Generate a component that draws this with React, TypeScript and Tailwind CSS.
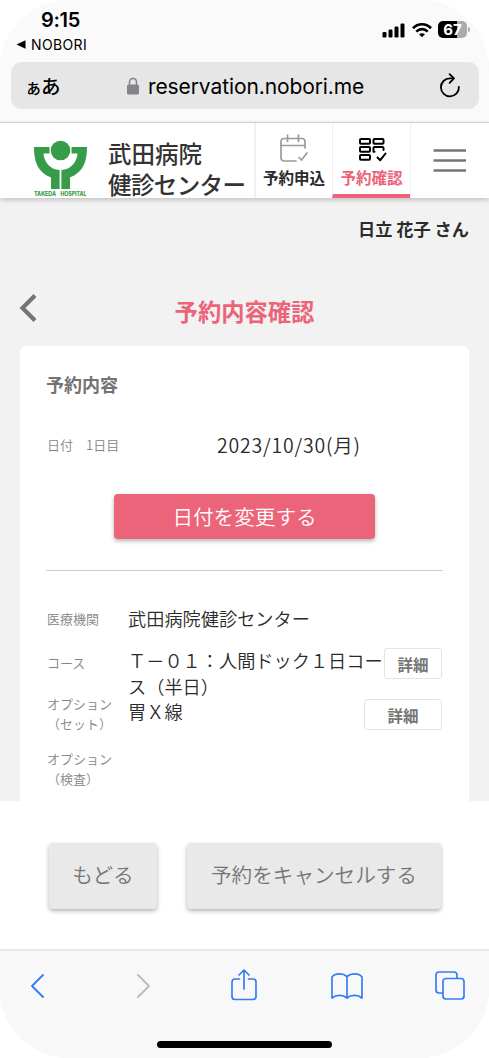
import type { ReactNode } from "react";

function StatusBar() {
  return (
    <div className="flex h-[62px] items-start justify-between">
      <div className="pt-[8px] pl-[16px]">
        <div className="pl-[25px] text-[20px] leading-[24px] font-semibold tracking-[-0.3px]">9:15</div>
        <div className="flex h-[24px] items-center gap-[5px]">
          <svg width="10" height="9" viewBox="0 0 10 9">
            <path d="M0.5 4.5L9.5 0.2V8.8Z" />
          </svg>
          <span className="text-[14px] tracking-[0.35px]">NOBORI</span>
        </div>
      </div>
      <div className="flex items-center gap-[6px] pt-[21px] pr-[19px]">
        <svg width="24" height="16" viewBox="0 0 24 16">
          <rect x="0.5" y="10" width="4" height="5.5" rx="1.2" />
          <rect x="6.5" y="7.5" width="4" height="8" rx="1.2" />
          <rect x="12.5" y="4.5" width="4" height="11" rx="1.2" />
          <rect x="18.5" y="1.5" width="4" height="14" rx="1.2" />
        </svg>
        <svg width="20" height="16" viewBox="0 0 20 16" fill="none" stroke="#000" strokeWidth="2.7">
          <path d="M1 6.2C6 0.9 14 0.9 19 6.2" />
          <path d="M4.3 9.6C7.5 6.4 12.5 6.4 15.7 9.6" />
          <path d="M10 15.2L7 12.2C8.7 10.8 11.3 10.8 13 12.2Z" fill="#000" stroke="none" />
        </svg>
        <div className="flex items-center gap-px">
          <div className="flex h-[17px] w-[29px] items-center justify-center rounded-[5px] bg-[linear-gradient(90deg,#000_67%,#ababab_67%)] text-[15px] leading-none font-bold text-white">
            67
          </div>
          <div className="h-[5px] w-[2px] rounded-r-full bg-[#ababab]" />
        </div>
      </div>
    </div>
  );
}

function AddressBar() {
  return (
    <div className="mr-[10px] ml-[11px] flex h-[47px] items-center rounded-[11px] bg-[#e6e6e6]">
      <div className="flex w-[115px] items-baseline pl-[14px] font-['Noto_Sans_CJK_JP',sans-serif] leading-none font-medium">
        <span className="-mr-px text-[17px]">ぁ</span>
        <span className="text-[19.5px]">あ</span>
      </div>
      <svg width="14" height="18" viewBox="0 0 14 18">
        <path d="M3.5 9V5.2C3.5 0.2 10.5 0.2 10.5 5.2V9" fill="none" stroke="#858489" strokeWidth="1.5" />
        <rect x="1" y="7.6" width="12" height="10" rx="1.6" fill="#858489" />
      </svg>
      <div className="flex-1 pt-[2px] pl-[8px] text-[21px] tracking-[-0.1px]">reservation.nobori.me</div>
      <svg className="mr-[17px]" width="24" height="28" viewBox="0 0 24 28" fill="none" stroke="#000" strokeWidth="1.8" strokeLinecap="round" strokeLinejoin="round">
        <path d="M20.9 14.8A9 9 0 1 1 11.9 6.3H15.5" />
        <path d="M11.6 2.2L16 6.4L11.6 10.8" />
      </svg>
    </div>
  );
}

function HospitalLogo() {
  return (
    <svg className="overflow-visible" width="56" height="58" viewBox="0 0 56 58" fill="#369c49">
      <circle cx="27.5" cy="10.5" r="9.8" />
      <path d="M1 7H16.5V13.5H10.5C11 22 17 29.5 26.6 30V49H18V37.5C7 33 1 25 1 7Z" />
      <path d="M54 7H38.5V13.5H44.5C44 22 38 29.5 28.4 30V49H37V37.5C48 33 54 25 54 7Z" />
      <text x="1" y="55.5" fontSize="5.5" fontWeight="800" textLength="22" lengthAdjust="spacingAndGlyphs">TAKEDA</text>
      <text x="27.5" y="55.5" fontSize="5.5" fontWeight="800" textLength="26" lengthAdjust="spacingAndGlyphs">HOSPITAL</text>
    </svg>
  );
}

function SiteHeader() {
  return (
    <header className="relative flex h-[76px] border-t border-[#cfcfcf] bg-white font-['Noto_Sans_CJK_JP',sans-serif] shadow-[0_2px_5px_rgba(0,0,0,0.2)]">
      <div className="flex w-[254px] pl-[33px]">
        <div className="pt-[17px] font-['Inter',sans-serif]">
          <HospitalLogo />
        </div>
        <div className="pt-[15px] pl-[19px] text-[23.5px] leading-[31px] font-medium whitespace-nowrap text-[#333]">
          <div>武田病院</div>
          <div className="tracking-[-0.6px]">健診センター</div>
        </div>
      </div>
      <div className="flex w-[78px] flex-col items-center border-l-2 border-[#f0f0f0] pt-[11px]">
        <svg width="30" height="30" viewBox="0 0 30 30" fill="none" stroke="#9a9a9a" strokeWidth="1.7" strokeLinecap="round">
          <path d="M26 14V7.5Q26 4.5 23 4.5H5Q2 4.5 2 7.5V23.5Q2 27 5.5 27H17" />
          <path d="M2 11.5H26M8.5 1.2V7.5M19.5 1.2V7.5M20 23.5L22.5 26L28 19" />
        </svg>
        <div className="pt-px text-[15.5px] leading-[24px] font-bold text-[#2b2b2b]">予約申込</div>
      </div>
      <div className="flex w-[78px] flex-col items-center border-b-4 border-l border-b-[#ec6479] border-l-[#f0f0f0] pt-[11px]">
        <svg width="30" height="30" viewBox="0 0 30 30" fill="none" stroke="#000" strokeWidth="2" strokeLinecap="round" strokeLinejoin="round">
          <rect x="3" y="5" width="10" height="4.8" rx="1" />
          <rect x="16.5" y="5" width="10" height="4.8" rx="1" />
          <rect x="3" y="13" width="10" height="4.8" rx="1" />
          <rect x="3" y="21" width="10" height="4.8" rx="1" />
          <path d="M17.5 17.8H16.5V14Q16.5 13 17.5 13H25.5Q26.5 13 26.5 14V16M20.5 23.5L23.3 26.2L28.5 19.5" />
        </svg>
        <div className="pt-px text-[15.5px] leading-[24px] font-bold text-[#ec6479]">予約確認</div>
      </div>
      <div className="flex flex-1 justify-center border-l border-[#f0f0f0] pt-[25px]">
        <svg width="34" height="26" viewBox="0 0 34 26" stroke="#757575" strokeWidth="2.4">
          <path d="M0.5 2.5H33M0.5 12.5H33M0.5 22.5H33" />
        </svg>
      </div>
    </header>
  );
}

function DetailButton({ className }: { className: string }) {
  return (
    <button className={`h-[31px] shrink-0 rounded-[3px] border-[1.5px] border-[#e3e4e8] bg-white pt-[2px] text-[15.5px] leading-none font-bold text-[#757575] ${className}`}>
      詳細
    </button>
  );
}

function Label({ children }: { children: ReactNode }) {
  return <div className="w-[81px] shrink-0 text-[13px] leading-[19.5px] text-[#858585]">{children}</div>;
}

function ReservationCard() {
  return (
    <section className="mx-[20px] h-[455px] rounded-t-[6px] bg-white px-[26px] font-[350]">
      <h2 className="pt-[25px] text-[18px] leading-[26px] font-bold text-[#737373]">予約内容</h2>
      <div className="mt-[33px] flex h-[30px] items-center">
        <div className="w-[171px] pl-px text-[13px] text-[#858585]">日付　1日目</div>
        <div className="text-[19.5px] tracking-[0.8px] text-[#2b2b2b]">2023/10/30(月)</div>
      </div>
      <button className="mt-[34px] ml-[68px] flex h-[45px] w-[261px] items-center justify-center rounded-[4px] bg-[#ec6479] pb-px text-[20.6px] text-white shadow-[0_2px_4px_rgba(0,0,0,0.3)]">
        日付を変更する
      </button>
      <hr className="mt-[31px] border-[#cbcfcf]" />

      <div className="mt-[33px] flex h-[30px] items-center pl-px">
        <Label>医療機関</Label>
        <div className="text-[18.2px] text-[#2b2b2b]">武田病院健診センター</div>
      </div>
      <div className="mt-[14px] flex h-[51px] pl-px">
        <div className="pt-[5px]">
          <Label>コース</Label>
        </div>
        <div className="-mt-px w-[256px] shrink-0 text-[18.2px] leading-[26px] text-[#2b2b2b]">
          Ｔ－０１：人間ドック１日コー
          <br />
          ス（半日）
        </div>
        <DetailButton className="w-[58px]" />
      </div>
      <div className="flex h-[55px] pl-px">
        <div className="-mt-[5px]">
          <Label>
            オプション
            <br />
            （セット）
          </Label>
        </div>
        <div className="-mt-px w-[236px] shrink-0 text-[18.2px] leading-[26px] text-[#2b2b2b]">胃Ｘ線</div>
        <DetailButton className="w-[78px]" />
      </div>
      <div className="-mt-[5px] pl-px">
        <Label>
          オプション
          <br />
          （検査）
        </Label>
      </div>
    </section>
  );
}

function ActionButton({ className, children }: { className: string; children: ReactNode }) {
  return (
    <button className={`h-[66px] rounded-[4px] bg-[#e9e9e9] text-[20.6px] font-[350] text-[#757575] shadow-[0_2px_4px_rgba(0,0,0,0.3)] ${className}`}>
      {children}
    </button>
  );
}

function BrowserToolbar() {
  return (
    <footer className="h-[109px] border-t-2 border-[#e8e8e8] bg-[#f8f8f8]">
      <div className="flex h-[70px] items-center pl-[28px]">
        <svg width="18" height="28" viewBox="0 0 18 28" fill="none" stroke="#347cf6" strokeWidth="1.9" strokeLinecap="round" strokeLinejoin="round">
          <path d="M15 3L4 14L15 25" />
        </svg>
        <svg className="ml-[89px]" width="18" height="28" viewBox="0 0 18 28" fill="none" stroke="#bcbcbc" strokeWidth="1.9" strokeLinecap="round" strokeLinejoin="round">
          <path d="M3 3L14 14L3 25" />
        </svg>
        <svg className="mb-[2px] ml-[77px]" width="28" height="34" viewBox="0 0 28 34" fill="none" stroke="#347cf6" strokeWidth="1.7" strokeLinecap="round" strokeLinejoin="round">
          <path d="M9.5 11H5Q2 11 2 14V28.5Q2 31.5 5 31.5H23Q26 31.5 26 28.5V14Q26 11 23 11H18.5" />
          <path d="M14 21V2M9 7L14 2L19 7" />
        </svg>
        <svg className="ml-[72px]" width="34" height="28" viewBox="0 0 34 28" fill="none" stroke="#347cf6" strokeWidth="1.7" strokeLinejoin="round">
          <path d="M17 4.5C13 1 5 1 2 5V26C6 22.5 13 22.5 17 26C21 22.5 28 22.5 32 26V5C29 1 21 1 17 4.5ZM17 4.5V26" />
        </svg>
        <svg className="ml-[70px]" width="32" height="32" viewBox="0 0 32 32" fill="none" stroke="#347cf6" strokeWidth="1.7" strokeLinejoin="round">
          <path d="M23 8V5Q23 2 20 2H5Q2 2 2 5V20Q2 23 5 23H9" />
          <rect x="9" y="8.5" width="21" height="20.5" rx="3" />
        </svg>
      </div>
      <div className="mt-[20px] ml-[157px] h-[7px] w-[175px] rounded-full bg-black" />
    </footer>
  );
}

export default function App() {
  return (
    <div className="h-[1058px] w-[489px] bg-white font-['Inter','Noto_Sans_CJK_JP',sans-serif] text-black">
      <div className="flex h-full flex-col overflow-hidden rounded-[70px] bg-[#f2f2f2]">
        <div className="h-[122px] bg-[#fafafa]">
          <StatusBar />
          <AddressBar />
        </div>
        <SiteHeader />
        <main className="h-[603px] font-['Noto_Sans_CJK_JP',sans-serif]">
          <div className="h-[64px] pt-[18px] pr-[20px] text-right text-[17.2px] leading-[26px] font-bold text-[#2b2b2b]">
            日立 花子 さん
          </div>
          <div className="grid h-[84px] grid-cols-[60px_1fr_60px] items-start pt-[30px]">
            <svg className="ml-[17px]" width="20" height="32" viewBox="0 0 20 32" fill="none" stroke="#757575" strokeWidth="4.2">
              <path d="M18 3.5L5.5 16L18 28.5" />
            </svg>
            <h1 className="pt-[3px] text-center text-[23.3px] leading-[32px] font-bold text-[#ec6479]">予約内容確認</h1>
          </div>
          <ReservationCard />
        </main>
        <div className="flex h-[148px] items-start gap-[30px] bg-white pt-[42px] pl-[49px]">
          <ActionButton className="w-[108px]">もどる</ActionButton>
          <ActionButton className="w-[254px]">予約をキャンセルする</ActionButton>
        </div>
        <BrowserToolbar />
      </div>
    </div>
  );
}
